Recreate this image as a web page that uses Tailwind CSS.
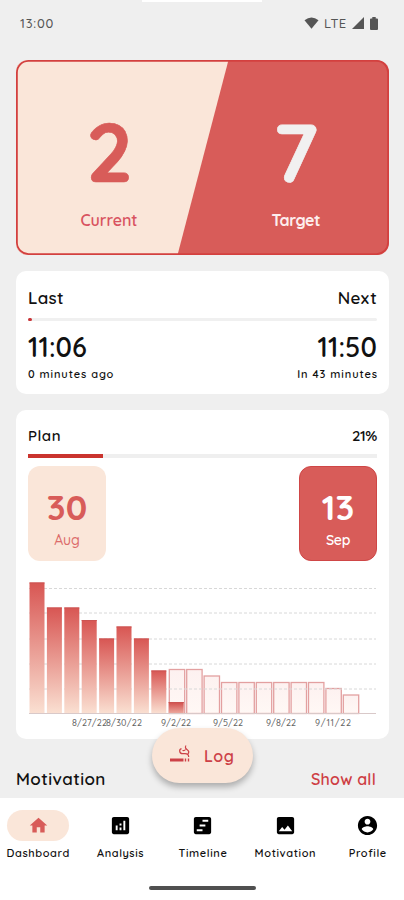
<!DOCTYPE html>
<html lang="en">
<head>
    <meta charset="UTF-8">
    <meta name="viewport" content="width=device-width, initial-scale=1.0">
    <title>Dashboard</title>
    <script src="https://cdn.jsdelivr.net/npm/@tailwindcss/browser@4"></script>
</head>
<body class="bg-[#efefef] font-[Quicksand,Lato,sans-serif] text-[#111]">
    <div class="relative h-[900px] w-[404px] overflow-hidden flex flex-col">
        <div class="mx-auto h-[2px] w-[120px] bg-white shrink-0"></div>

        <!-- Status bar -->
        <header class="h-[58px] shrink-0 flex items-start justify-between pl-5 pr-[26px] pt-[11px] text-[#555] font-medium">
            <span class="text-[13px] leading-5 tracking-[0.8px]">13:00</span>
            <div class="flex items-center h-5">
                <svg class="w-[15px] h-3" viewBox="0 0 15 12"><path fill="#555" d="M.5 3.2Q7.500-2 14.500 3.200L7.500 11.700Z"/></svg>
                <span class="ml-[5px] w-[25px] text-[13px] leading-5 tracking-[0.3px]">LTE</span>
                <svg class="ml-[3px] w-3 h-3" viewBox="0 0 12 12"><path fill="#555" d="M12 0v12H0z"/></svg>
                <svg class="ml-[6px] w-2 h-[13px]" viewBox="0 0 8 13"><path fill="#555" d="M2.300 0h3.400v1.500H7q1 0 1 1V12q0 1-1 1H1q-1 0-1-1V2.500q0-1 1-1h1.300z"/></svg>
            </div>
        </header>

        <main class="flex flex-col pl-4 pr-[15px]">
            <!-- Current / target -->
            <section class="h-[195px] rounded-xl overflow-hidden">
                <svg class="block w-[373px] h-[195px] font-[Quicksand,Lato,sans-serif]" viewBox="0 0 373 195">
                    <rect width="373" height="195" fill="#d85c59"/>
                    <path fill="#fae6d9" d="M0 0H212.500L161.500 195H0z"/>
                    <rect x=".9" y=".9" width="371.200" height="193.200" rx="11.500" fill="none" stroke="#d3403f" stroke-width="1.800"/>
                    <g font-size="83" font-weight="700" text-anchor="middle" stroke-width=".6">
                        <text x="93.500" y="122" fill="#d85c59" stroke="#d85c59">2</text>
                        <text x="279.500" y="122" fill="#f1f0f0" stroke="#f1f0f0">7</text>
                    </g>
                    <g font-size="16" font-weight="600">
                        <text x="64.500" y="166" textLength="57" fill="#d85360">Current</text>
                        <text x="255.500" y="166" textLength="49" font-weight="700" fill="#fdeeee">Target</text>
                    </g>
                </svg>
            </section>

            <!-- Last / next -->
            <section class="mt-4 h-[123px] rounded-[10px] bg-white px-3 pt-[15px]">
                <div class="flex justify-between text-[17px] leading-6 font-semibold tracking-[0.3px]">
                    <span>Last</span><span>Next</span>
                </div>
                <div class="mt-[8px] h-[3px] rounded-full bg-[#f0f0f0]"><div class="h-[3px] w-1 rounded-full bg-[#c93336]"></div></div>
                <div class="mt-[10px] flex justify-between text-[27px] leading-8 font-semibold">
                    <span class="tracking-[0.1px]">11:06</span><span class="tracking-[0.1px]">11:50</span>
                </div>
                <div class="mt-[3px] flex justify-between text-[11px] leading-4 font-semibold tracking-[0.9px]">
                    <span>0 minutes ago</span><span class="-mr-px">In 43 minutes</span>
                </div>
            </section>

            <!-- Plan -->
            <section class="mt-4 h-[329px] rounded-[10px] bg-white px-3 pt-[14px]">
                <div class="flex justify-between text-[15px] leading-6 font-semibold">
                    <span class="tracking-[0.5px]">Plan</span><span class="tracking-[-0.4px]">21%</span>
                </div>
                <div class="mt-[6px] h-1 bg-[#efefef]"><div class="h-1 bg-[#ca342e]" style="width: 21.4%"></div></div>
                <div class="mt-2 flex justify-between text-center">
                    <div class="w-[78px] h-[95px] rounded-xl bg-[#fae6d9] pt-[21px]">
                        <div class="text-[35px] leading-10 font-bold text-[#d85c59]">30</div>
                        <div class="mt-[3px] text-[14px] leading-5 font-medium text-[#dc6c6a]">Aug</div>
                    </div>
                    <div class="w-[78px] h-[95px] rounded-xl border border-[#cf4646] bg-[#d85c59] pt-[20px] text-white">
                        <div class="text-[35px] leading-10 font-bold">13</div>
                        <div class="mt-[3px] text-[14px] leading-5 font-semibold tracking-[-0.3px]">Sep</div>
                    </div>
                </div>
                <svg id="chart" class="mt-[14px] block w-[349px] h-[155px] font-[Quicksand,Lato,sans-serif]" viewBox="28 575 349 155"></svg>
            </section>

            <div class="mt-[28px] flex justify-between text-[17px] leading-6 font-semibold">
                <span class="tracking-[0.4px]">Motivation</span>
                <span class="mr-[13px] text-[16px] text-[#ce3e43] tracking-[0.2px]">Show all</span>
            </div>
        </main>

        <button class="absolute left-[152px] top-[728px] w-[101px] h-[55px] rounded-full bg-[#fae6d9] shadow-[0_4px_6px_rgba(0,0,0,0.28)] flex items-center pl-[18px] text-[#cd4147]">
            <svg class="w-[22px] h-[19px] -mt-1" viewBox="0 0 22 19" fill="none" stroke="#cd4147">
                <path d="M0 16h13.500" stroke-width="3"/>
                <path d="M15.500 14.500v3M18.500 14.500v3" stroke-width="1.400"/>
                <path d="M18.700 13c0-2.300-1-3.300-3.700-3.300h-2.500C9.500 9.700 8.500 5.500 11.500 4.700M16 1.500c-1.500 2 0 3.500 1.500 4.500 1.500 1 1.500 2.500.500 4M15.500 5.500c-1 1.500-2 1.200-3 1" stroke-width="1.200"/>
            </svg>
            <span class="ml-[12px] text-[16px] font-semibold tracking-[0.5px]">Log</span>
        </button>

        <!-- Bottom navigation -->
        <nav class="absolute left-0 top-[798px] w-[404px] h-[102px] bg-white overflow-hidden">
            <div class="-ml-[3px] w-[412px] flex pt-3 text-[11px] font-semibold leading-4 tracking-[0.6px]">
                <div class="w-1/5 flex flex-col items-center">
                    <div class="w-[62px] h-[31px] rounded-full bg-[#fae6d9] flex items-center justify-center">
                        <svg class="w-[21px] h-[21px]" viewBox="0 0 24 24" fill="#d85c59"><path d="M10 20v-6h4v6h5v-8h3L12 3 2 12h3v8z"/></svg>
                    </div>
                    <span class="mt-1">Dashboard</span>
                </div>
                <div class="w-1/5 flex flex-col items-center">
                    <div class="h-[31px] flex items-center">
                        <svg class="w-[23px] h-[23px]" viewBox="0 0 24 24"><path d="M19 3H5c-1.100 0-2 .9-2 2v14c0 1.100.9 2 2 2h14c1.100 0 2-.9 2-2V5c0-1.100-.9-2-2-2zM9 17H7v-5h2v5zm4 0h-2v-3h2v3zm0-5h-2v-2h2v2zm4 5h-2V7h2v10z"/></svg>
                    </div>
                    <span class="mt-1">Analysis</span>
                </div>
                <div class="w-1/5 flex flex-col items-center">
                    <div class="h-[31px] flex items-center">
                        <svg class="w-[23px] h-[23px]" viewBox="0 0 24 24"><path d="M19 3H5c-1.100 0-2 .9-2 2v14c0 1.100.9 2 2 2h14c1.100 0 2-.9 2-2V5c0-1.100-.9-2-2-2zM12 18H6v-2h6v2zm3-5H9v-2h6v2zm3-5h-6V6h6v2z"/></svg>
                    </div>
                    <span class="mt-1">Timeline</span>
                </div>
                <div class="w-1/5 flex flex-col items-center">
                    <div class="h-[31px] flex items-center">
                        <svg class="w-[23px] h-[23px]" viewBox="0 0 24 24"><path d="M21 19V5c0-1.100-.9-2-2-2H5c-1.100 0-2 .9-2 2v14c0 1.100.9 2 2 2h14c1.100 0 2-.9 2-2zM8.500 13.500l2.500 3.010L14.500 12l4.500 6H5l3.500-4.500z"/></svg>
                    </div>
                    <span class="mt-1">Motivation</span>
                </div>
                <div class="w-1/5 flex flex-col items-center">
                    <div class="h-[31px] flex items-center">
                        <svg class="w-[23px] h-[23px]" viewBox="0 0 24 24"><path d="M12 2C6.480 2 2 6.480 2 12s4.480 10 10 10 10-4.480 10-10S17.520 2 12 2zm0 3c1.660 0 3 1.340 3 3s-1.340 3-3 3-3-1.340-3-3 1.340-3 3-3zm0 14.200c-2.500 0-4.710-1.280-6-3.220.030-1.990 4-3.080 6-3.080 1.990 0 5.970 1.090 6 3.080-1.290 1.940-3.500 3.220-6 3.220z"/></svg>
                    </div>
                    <span class="mt-1">Profile</span>
                </div>
            </div>
            <div class="mt-[25px] ml-[149px] h-[3.5px] w-[107px] rounded-full bg-[#505050]"></div>
        </nav>
    </div>

    <script>
        const base = 713.5;
        const left = 29.5;
        const step = 17.4;
        const smoked = [131, 106, 106, 93.5, 75, 87, 75, 43, 11.5];
        const planned = [44, 44, 37.5, 31, 31, 31, 31, 31, 31, 25, 18.5];
        const labels = [[72, 35, '8/27/22'], [106, 36, '8/30/22'], [161, 30, '9/2/22'], [213, 30, '9/5/22'], [266, 30, '9/8/22'], [315, 36, '9/11/22']];

        let svg = `<defs>
            <linearGradient id="red" x1="0" y1="0" x2="0" y2="1"><stop stop-color="#d85653"/><stop offset="1" stop-color="#fae0d2"/></linearGradient>
            <linearGradient id="stub" x1="0" y1="0" x2="0" y2="1"><stop stop-color="#d04c4a"/><stop offset="1" stop-color="#edaaa0"/></linearGradient>
            <linearGradient id="pale" x1="0" y1="0" x2="0" y2="1"><stop stop-color="#fdf1f0"/><stop offset="1" stop-color="#fff8f5"/></linearGradient>
        </defs>`;

        planned.forEach((h, i) => {
            const x = left + (i + 8) * step + 0.6;
            svg += `<rect x="${x}" y="${base - h}" width="15.400" height="${h}" fill="url(#pale)" stroke="#e3a0a0" stroke-width="1.300"/>`;
        });
        [588.5, 613, 639, 664, 689].forEach(y => {
            svg += `<path d="M29 ${y}H376" stroke="#d8d8d8" stroke-dasharray="3 2"/>`;
        });
        smoked.forEach((h, i) => {
            const x = left + i * step;
            svg += `<rect x="${x}" y="${base - h}" width="15" height="${h}" fill="url(${i === 8 ? '#stub' : '#red'})"/>`;
            svg += `<path d="M${x} ${base - h + 0.5}h15" stroke="#cb5452"/>`;
        });
        svg += `<path d="M29 ${base}H376" stroke="#d9c9c9"/>`;
        labels.forEach(([x, w, t]) => {
            svg += `<text x="${x}" y="726" textLength="${w}" font-size="9" font-weight="500" fill="#666">${t}</text>`;
        });
        document.getElementById('chart').innerHTML = svg;
    </script>
</body>
</html>
